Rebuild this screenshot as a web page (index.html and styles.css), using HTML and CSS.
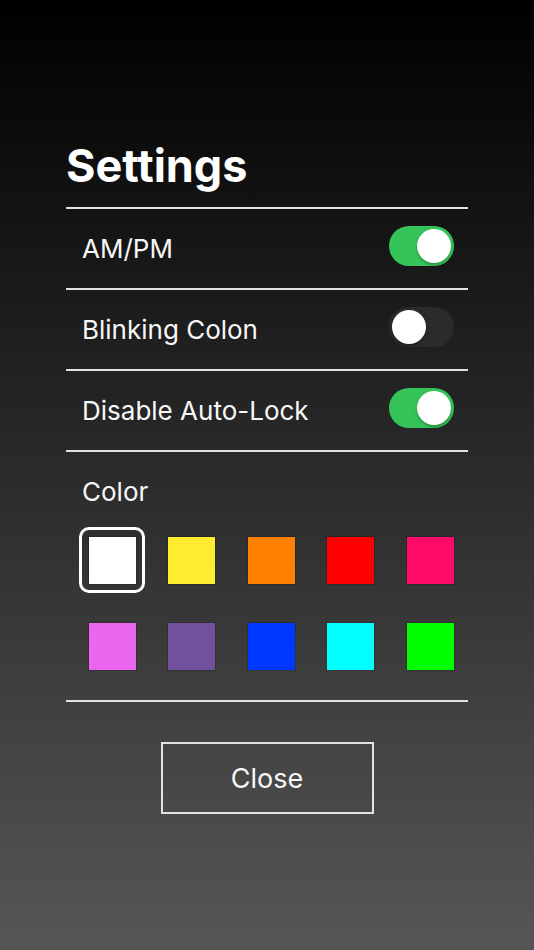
FILE: index.html
```html
<!DOCTYPE html>
<html>
<head>
    <title>Settings</title>
    <link rel="stylesheet" href="styles.css">
</head>
<body>
    <div class="panel">
        <h1 class="title">Settings</h1>
        <div class="row">
            <span class="label">AM/PM</span>
            <span class="toggle on"><span class="knob"></span></span>
        </div>
        <div class="row">
            <span class="label">Blinking Colon</span>
            <span class="toggle"><span class="knob"></span></span>
        </div>
        <div class="row">
            <span class="label">Disable Auto-Lock</span>
            <span class="toggle on"><span class="knob"></span></span>
        </div>
        <div class="colors">
            <div class="label color-label">Color</div>
            <div class="swatches">
                <span class="cell selected"><span class="swatch" style="background:#ffffff"></span></span>
                <span class="cell"><span class="swatch" style="background:#ffec2e"></span></span>
                <span class="cell"><span class="swatch" style="background:#ff8000"></span></span>
                <span class="cell"><span class="swatch" style="background:#ff0000"></span></span>
                <span class="cell"><span class="swatch" style="background:#ff0a67"></span></span>
                <span class="cell"><span class="swatch" style="background:#eb66ef"></span></span>
                <span class="cell"><span class="swatch" style="background:#73509b"></span></span>
                <span class="cell"><span class="swatch" style="background:#0038ff"></span></span>
                <span class="cell"><span class="swatch" style="background:#00ffff"></span></span>
                <span class="cell"><span class="swatch" style="background:#00ff00"></span></span>
            </div>
        </div>
        <div class="actions">
            <button class="close">Close</button>
        </div>
    </div>
</body>
</html>
```

FILE: styles.css
```css
html, body {
    margin: 0;
    height: 950px;
}
body {
    font-family: Inter, "Noto Sans", sans-serif;
    color: #f7f7f7;
    background: linear-gradient(to bottom, #000000 0%, #565656 100%);
    overflow: hidden;
}
.panel {
    width: 402px;
    margin: 0 auto 0 66px;
    padding-top: 140px;
}
.title {
    margin: 0 0 15px 0;
    font-size: 45px;
    line-height: 52px;
    font-weight: 700;
    color: #ffffff;
}
.row {
    height: 79px;
    border-top: 2px solid #e2e2e2;
    display: flex;
    align-items: center;
    justify-content: space-between;
    padding: 0 14px 0 16px;
}
.label {
    font-size: 26px;
    line-height: 30px;
}
.toggle {
    width: 65px;
    height: 40px;
    margin-bottom: 5px;
    border-radius: 20px;
    background: #2b2b2d;
    box-sizing: border-box;
    padding: 3px;
    display: flex;
    justify-content: flex-start;
}
.toggle.on {
    background: #35c459;
    justify-content: flex-end;
}
.knob {
    width: 34px;
    height: 34px;
    border-radius: 50%;
    background: #ffffff;
    box-shadow: 0 2px 3px rgba(0, 0, 0, 0.25);
}
.colors {
    border-top: 2px solid #e2e2e2;
    border-bottom: 2px solid #e2e2e2;
    padding: 25px 0 21px 0;
}
.color-label {
    padding-left: 16px;
}
.swatches {
    margin: 20px 0 0 13px;
    display: grid;
    grid-template-columns: repeat(5, 66px);
    column-gap: 13.5px;
    row-gap: 20px;
}
.cell {
    width: 66px;
    height: 66px;
    box-sizing: border-box;
    border: 3px solid transparent;
    border-radius: 10px;
    display: flex;
    align-items: center;
    justify-content: center;
}
.cell.selected {
    border-color: #ffffff;
}
.swatch {
    width: 47px;
    height: 47px;
    box-shadow: 0 0 0 1px rgba(0, 0, 0, 0.15);
}
.actions {
    display: flex;
    justify-content: center;
    padding-top: 40px;
}
.close {
    width: 213px;
    height: 72px;
    background: transparent;
    border: 2px solid #e2e2e2;
    color: #f7f7f7;
    font-family: Inter, "Noto Sans", sans-serif;
    font-size: 27px;
}
```
